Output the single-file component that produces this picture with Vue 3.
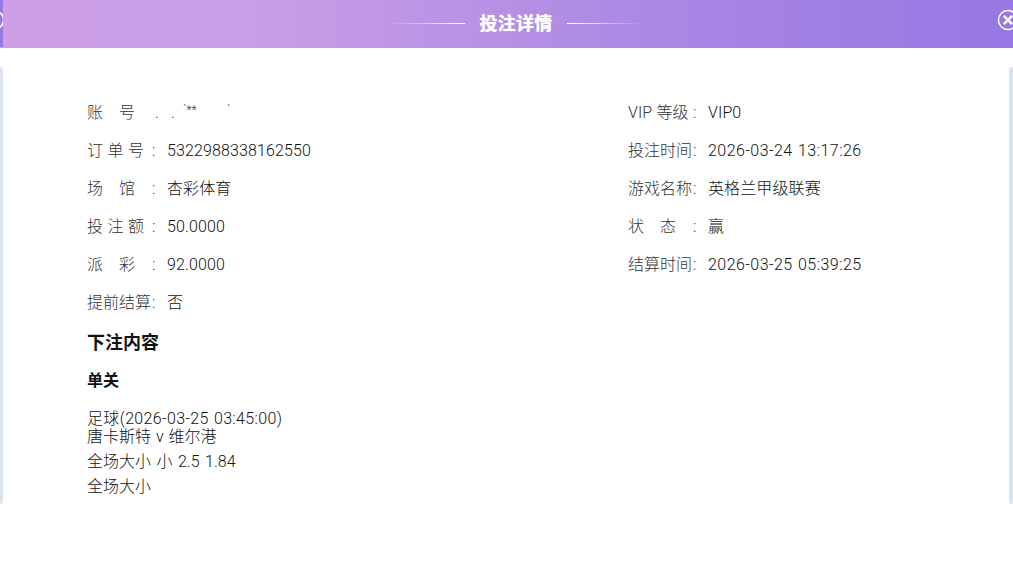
<script setup>
const leftRows = [
  { label: ['订', '单', '号'], value: '5322988338162550' },
  { label: ['场', '馆'], wide: true, value: '杏彩体育' },
  { label: ['投', '注', '额'], value: '50.0000' },
  { label: ['派', '彩'], wide: true, value: '92.0000' },
  { label: ['提前结算'], value: '否' }
]

const rightRows = [
  { label: ['VIP', '等级'], value: 'VIP0' },
  { label: ['投注时间'], value: '2026-03-24 13:17:26', date: true },
  { label: ['游戏名称'], value: '英格兰甲级联赛' },
  { label: ['状', '态'], wide: true, value: '赢' },
  { label: ['结算时间'], value: '2026-03-25 05:39:25', date: true }
]
</script>

<template>
  <div class="page">
    <header class="header">
      <span class="left-edge">
        <svg class="edge-icon" viewBox="0 0 22 22" width="22" height="22">
          <circle cx="11" cy="11" r="9.5" fill="none" stroke="#fff" stroke-width="1.5" />
        </svg>
      </span>
      <span class="title-line line-left"></span>
      <h1 class="title">投注详情</h1>
      <span class="title-line line-right"></span>
      <svg class="close" viewBox="0 0 22 22" width="22" height="22">
        <circle cx="11" cy="11" r="9.5" fill="none" stroke="#fff" stroke-width="1.5" />
        <path d="M6.8 6.8 15.2 15.2M15.2 6.8 6.8 15.2" stroke="#fff" stroke-width="2.6" fill="none" />
      </svg>
    </header>

    <main class="panel">
      <span class="strip strip-left"></span>
      <div class="panel-body">
        <div class="columns">
          <div>
            <div class="row">
              <span class="label wide"><i>账</i><i>号</i></span>
              <span class="account">
                <span class="dot">.</span>
                <span class="dot">.</span>
                <span class="mask">`**</span>
                <span class="mask mask-end">`</span>
              </span>
            </div>
            <div v-for="row in leftRows" :key="row.value" class="row">
              <span class="label" :class="{ wide: row.wide }"><i v-for="part in row.label" :key="part">{{ part }}</i></span>
              <span class="colon">:</span>
              <span class="value">{{ row.value }}</span>
            </div>
          </div>
          <div>
            <div v-for="row in rightRows" :key="row.value" class="row">
              <span class="label" :class="{ wide: row.wide }"><i v-for="part in row.label" :key="part">{{ part }}</i></span>
              <span class="colon">:</span>
              <span class="value" :class="{ date: row.date }">{{ row.value }}</span>
            </div>
          </div>
        </div>

        <h2 class="section-title">下注内容</h2>
        <h3 class="bet-type">单关</h3>
        <p class="match"><span class="date-small">足球(2026-03-25 03:45:00)</span><br />唐卡斯特 v 维尔港</p>
        <p class="bet-line odds">全场大小 小 2.5 1.84</p>
        <p class="bet-line">全场大小</p>
      </div>
      <span class="strip strip-right"></span>
    </main>
  </div>
</template>

<style scoped>
.page {
  width: 1013px;
  height: 565px;
  overflow: hidden;
  background: #fff;
  font-family: Roboto, "Noto Sans CJK SC", sans-serif;
  font-size: 16px;
  font-weight: 300;
  word-spacing: 1px;
  color: #111;
}

.header {
  position: relative;
  display: flex;
  align-items: center;
  justify-content: center;
  height: 48px;
  padding-left: 19px;
  box-sizing: border-box;
  background: linear-gradient(90deg, #cc9fe6 0%, #c99ee6 25%, #a886e4 68%, #9777e3 100%);
}

.left-edge {
  position: absolute;
  left: 0;
  top: 0;
  width: 3px;
  height: 47px;
  overflow: hidden;
  background: #9777e3;
}

.edge-icon {
  position: absolute;
  top: 9px;
  left: -17px;
}

.title {
  margin: 0 14px;
  font-size: 18px;
  font-weight: 700;
  letter-spacing: 0.3px;
  line-height: 48px;
  color: #fff;
  text-shadow: 0 0 1px #fff;
}

.title-line {
  width: 76px;
  height: 1px;
  margin-top: -2px;
}

.line-left {
  background: linear-gradient(90deg, rgba(255, 255, 255, 0), #fff);
}

.line-right {
  background: linear-gradient(90deg, #fff, rgba(255, 255, 255, 0));
}

.close {
  position: absolute;
  top: 9px;
  left: 997px;
}

.panel {
  display: flex;
  margin-top: 19px;
  height: 437px;
}

.strip {
  width: 3px;
  background: #dbe3ef;
}

.strip-left {
  border-radius: 0 3px 3px 0;
}

.strip-right {
  width: 4px;
  border-radius: 3px 0 0 3px;
}

.panel-body {
  flex: 1;
  padding: 27px 0 0 84px;
  background: #fff;
}

.columns {
  display: grid;
  grid-template-columns: 541px 1fr;
}

.row {
  display: flex;
  height: 38px;
  line-height: 38px;
  color: #333;
}

.label {
  display: flex;
  gap: 4.5px;
  width: 64px;
}

.label.wide {
  gap: 16px;
}

.label i {
  font-style: normal;
}

.colon {
  width: 15px;
  padding-left: 1px;
}

.value {
  letter-spacing: 0.12px;
  color: #111;
}

.value.date {
  letter-spacing: 0.45px;
}

.account {
  display: flex;
  padding-left: 4px;
  color: #333;
}

.dot {
  width: 16px;
}

.mask {
  margin-top: -3px;
  font-size: 12px;
  width: 28px;
  margin-left: -4px;
}

.mask-end {
  width: auto;
  margin-left: 16px;
}

.section-title {
  margin: 2px 0 0;
  font-size: 18px;
  font-weight: 700;
  line-height: 38px;
  color: #111;
}

.bet-type {
  margin: 0;
  font-size: 16px;
  font-weight: 700;
  line-height: 38px;
  color: #111;
}

.match {
  margin: 10px 0 0;
  line-height: 18px;
}

.date-small {
  letter-spacing: 0.34px;
}

.bet-line {
  margin: 0;
  line-height: 25px;
}

.odds {
  word-spacing: 1.6px;
}

.match + .bet-line {
  margin-top: 3px;
}
</style>
